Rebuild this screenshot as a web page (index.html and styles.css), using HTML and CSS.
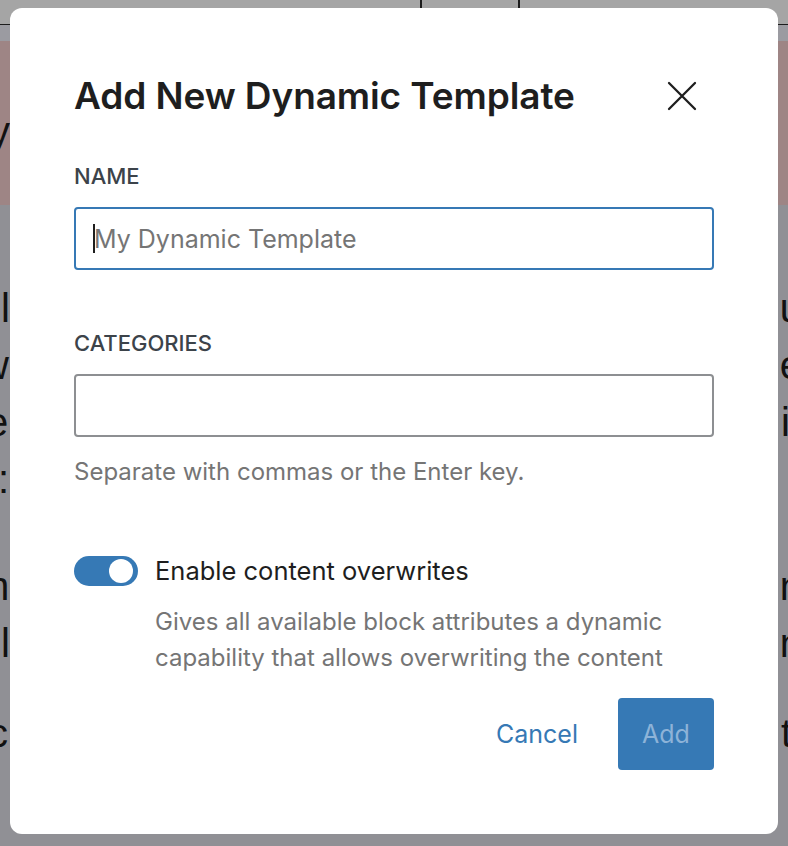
FILE: index.html
```html
<!DOCTYPE html>
<html lang="en">
<head>
<meta charset="utf-8">
<title>Add New Dynamic Template</title>
<link rel="stylesheet" href="styles.css">
</head>
<body>
<div class="page">
  <div class="toolbar">
    <div class="cell cell-a"></div>
    <div class="cell cell-b"></div>
    <div class="cell cell-c"></div>
  </div>
  <div class="strip"></div>
  <div class="banner"><span class="bg-left">y</span></div>
  <div class="content">
    <div class="para para-1">
      <div class="bg-row"><span class="bg-left l1">l</span><span class="bg-right r1">u</span></div>
      <div class="bg-row"><span class="bg-left l2">w</span><span class="bg-right r2">e</span></div>
      <div class="bg-row"><span class="bg-left l3">e</span><span class="bg-right r3">i</span></div>
      <div class="bg-row"><span class="bg-left l4">:</span><span class="bg-right"></span></div>
    </div>
    <div class="para para-2">
      <div class="bg-row"><span class="bg-left l5">m</span><span class="bg-right r5">n</span></div>
      <div class="bg-row"><span class="bg-left l6">l</span><span class="bg-right r6">n</span></div>
    </div>
    <div class="para para-3">
      <div class="bg-row"><span class="bg-left l7">c</span><span class="bg-right r7">t</span></div>
    </div>
  </div>
</div>

<div class="modal" role="dialog" aria-labelledby="modal-title">
  <div class="modal-header">
    <h1 id="modal-title" class="modal-title">Add New Dynamic Template</h1>
    <button class="close-btn" aria-label="Close">
      <svg width="32" height="32" viewBox="0 0 32 32" aria-hidden="true"><path d="M3 3 L29 29 M29 3 L3 29" stroke="#1e1e1e" stroke-width="2.3" stroke-linecap="round" fill="none"/></svg>
    </button>
  </div>

  <div class="field field-name">
    <label class="field-label" for="tpl-name">NAME</label>
    <div class="input input-focus">
      <span class="caret"></span><span class="placeholder">My Dynamic Template</span>
    </div>
  </div>

  <div class="field field-cats">
    <label class="field-label">CATEGORIES</label>
    <div class="input"></div>
    <p class="help">Separate with commas or the Enter key.</p>
  </div>

  <div class="toggle-row">
    <span class="toggle"><span class="knob"></span></span>
    <div class="toggle-text">
      <div class="toggle-label">Enable content overwrites</div>
      <p class="toggle-help">Gives all available block attributes a dynamic<br>capability that allows overwriting the content</p>
    </div>
  </div>

  <div class="actions">
    <button class="btn-link">Cancel</button>
    <button class="btn-primary" disabled>Add</button>
  </div>
</div>
</body>
</html>
```

FILE: styles.css
```css
* { box-sizing: border-box; }
html, body { margin: 0; padding: 0; }
body {
  width: 788px;
  height: 846px;
  overflow: hidden;
  position: relative;
  font-family: Inter, "Noto Sans", sans-serif;
  background: #8f8f94;
}

/* ---------- dimmed background page ---------- */
.page { width: 788px; height: 846px; display: flex; flex-direction: column; }
.toolbar {
  height: 25px;
  background: #a5a5a5;
  border-bottom: 1px solid #1c1c1c;
  display: grid;
  grid-template-columns: 420px 98px 1fr;
}
.cell-b, .cell-c { border-left: 2px solid #1c1c1c; }
.strip { height: 16px; background: #9b9ba1; }
.banner {
  height: 164px;
  background: #9e8585;
  font-family: "Liberation Sans", sans-serif;
  font-size: 40px;
  line-height: 40px;
  padding-top: 70px;
  color: #111;
}
.banner .bg-left { margin-left: -10px; }
.content {
  flex: 1;
  background: #909095;
  font-family: "Liberation Sans", sans-serif;
  font-size: 40px;
  color: #111;
  padding-top: 75px;
}
.para { display: flex; flex-direction: column; }
.para-2 { margin-top: 50px; }
.para-3 { margin-top: 33px; }
.bg-row { display: flex; justify-content: space-between; height: 57px; line-height: 57px; }
.bg-left, .bg-right { display: inline-block; }
.l1 { margin-left: 1px; }
.l2 { margin-left: -20px; }
.l3 { margin-left: -14px; }
.l4 { margin-left: -2px; }
.l5 { margin-left: -24px; }
.l6 { margin-left: 1px; }
.l7 { margin-left: -12px; }
.r1 { margin-right: -14px; }
.r2 { margin-right: -14px; }
.r3 { margin-right: -2px; }
.r5 { margin-right: -14px; }
.r6 { margin-right: -14px; }
.r7 { margin-right: -4px; }

/* ---------- modal ---------- */
.modal {
  position: absolute;
  left: 10px;
  top: 8px;
  width: 768px;
  height: 826px;
  background: #fff;
  border-radius: 12px;
  padding: 0 64px;
  display: flex;
  flex-direction: column;
  color: #1e1e1e;
}
.modal-header {
  display: flex;
  align-items: center;
  justify-content: space-between;
  margin-top: 68px;
  height: 40px;
}
.modal-title {
  margin: 0;
  font-size: 37px;
  line-height: 40px;
  font-weight: 600;
  letter-spacing: -0.1px;
  color: #1e1e1e;
}
.close-btn {
  border: 0;
  background: none;
  padding: 0;
  width: 32px;
  height: 32px;
  margin-right: 16px;
  display: flex;
}

.field { display: flex; flex-direction: column; }
.field-name { margin-top: 48px; }
.field-cats { margin-top: 61px; }
.field-label {
  font-size: 22px;
  line-height: 24px;
  font-weight: 500;
  color: #3c434a;
  margin-bottom: 19px;
}
.input {
  height: 63px;
  border: 2px solid #8d8f92;
  border-radius: 4px;
  display: flex;
  align-items: center;
  padding-left: 17px;
}
.input-focus { border-color: #3679b5; }
.caret { width: 2px; height: 29px; background: #1e1e1e; }
.placeholder { color: #757575; font-size: 25px; margin-left: -1px; }
.help {
  margin: 21px 0 0;
  font-size: 24px;
  line-height: 28px;
  color: #757575;
}

.toggle-row { display: flex; margin-top: 70px; gap: 17px; }
.toggle {
  width: 64px;
  height: 30px;
  border-radius: 15px;
  background: #3679b5;
  flex: none;
  display: flex;
  align-items: center;
  justify-content: flex-end;
  padding-right: 5px;
}
.knob { width: 24px; height: 24px; border-radius: 50%; background: #fff; }
.toggle-text { display: flex; flex-direction: column; }
.toggle-label { font-size: 25.5px; line-height: 30px; color: #1e1e1e; }
.toggle-help {
  margin: 18px 0 0;
  font-size: 24px;
  line-height: 36px;
  color: #757575;
}

.actions {
  display: flex;
  justify-content: flex-end;
  align-items: center;
  gap: 40px;
  margin-top: 22px;
}
.btn-link {
  border: 0;
  background: none;
  padding: 0;
  font-family: inherit;
  font-size: 25px;
  color: #3679b5;
}
.btn-primary {
  border: 0;
  width: 96px;
  height: 72px;
  border-radius: 4px;
  background: #3679b5;
  color: #8db3d8;
  font-family: inherit;
  font-size: 25px;
}
```
